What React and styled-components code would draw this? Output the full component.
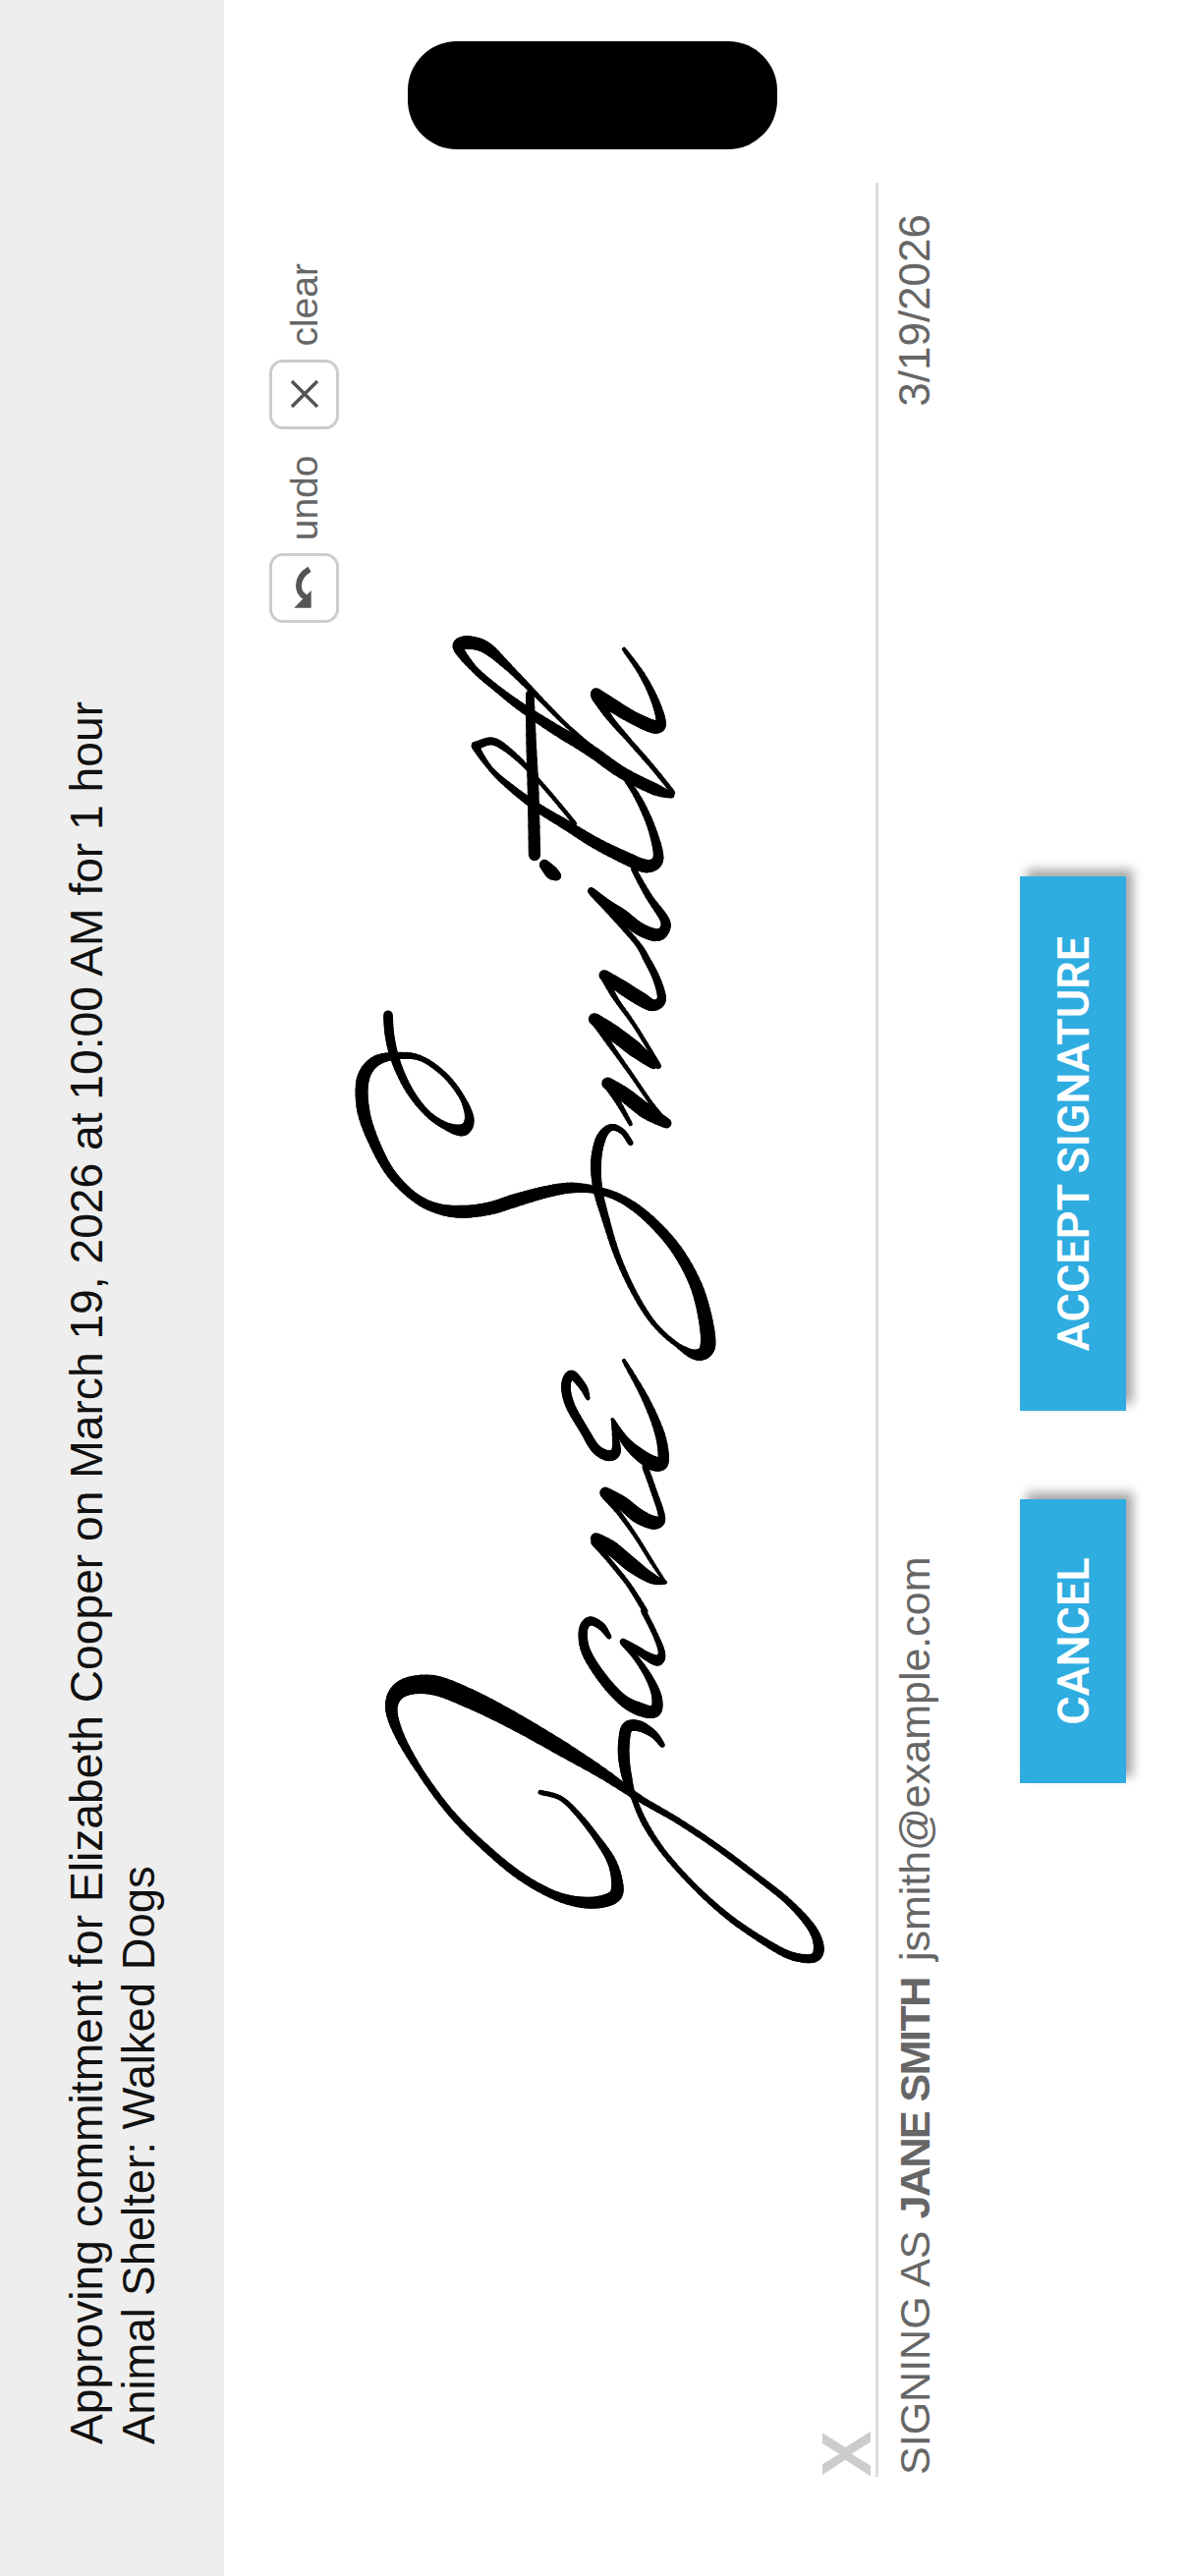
import React from 'react'
import styled, { createGlobalStyle } from 'styled-components'

const GlobalStyle = createGlobalStyle`
  html, body {
    margin: 0;
    width: 1206px;
    height: 2622px;
    overflow: hidden;
    background: #fff;
  }
`;

// the app is landscape on a phone held upright, so the whole page is turned
const Stage = styled.div`
  width: 2622px;
  height: 1206px;
  display: flex;
  flex-direction: column;
  transform-origin: 0 0;
  transform: translateY(2622px) rotate(-90deg);
  font-family: "Liberation Sans", Arial, sans-serif;
`;

const Island = styled.div`
  position: absolute;
  left: 2470px;
  top: 415px;
  width: 110px;
  height: 376px;
  background: #000;
  border-radius: 50px;
`;

const Header = styled.header`
  height: 228px;
  box-sizing: border-box;
  padding: 62px 0 0 134px;
  background: #eee;
  color: #111;
  line-height: 53px;
`;

const HeaderLine = styled.div`
  font-size: ${p => p.$size}px;
`;

const Body = styled.main`
  flex: 1;
  display: flex;
  flex-direction: column;
  padding: 46px 186px 0 101px;
`;

const Pad = styled.div`
  position: relative;
  height: 617px;
  border-bottom: 3px solid #ddd;
  display: flex;
  justify-content: flex-end;
  align-items: flex-start;
  padding-right: 82px;
`;

const Tool = styled.div`
  display: flex;
  align-items: center;
  gap: 13px;
  margin-left: 27px;
  color: #666;
  font-size: 39px;
  line-height: 65px;
`;

const ToolBox = styled.div`
  width: 71px;
  height: 71px;
  box-sizing: border-box;
  border: 3px solid #ccc;
  border-radius: 14px;
  background: #fff;
  display: flex;
  align-items: center;
  justify-content: center;
`;

const Signature = styled.svg`
  position: absolute;
  left: 0;
  top: 0;
  width: 2335px;
  height: 617px;
  pointer-events: none;
`;

const Mark = styled.span`
  position: absolute;
  left: 0;
  bottom: 4px;
  color: #ccc;
  font-size: 70px;
  line-height: 50px;
  font-weight: 700;
`;

const Meta = styled.div`
  display: flex;
  justify-content: space-between;
  align-items: baseline;
  padding: 12px 32px 0 2px;
  color: #666;
  font-size: 43px;
  line-height: 50px;
`;

const SignerName = styled.b`
  letter-spacing: -1.5px;
`;

const Email = styled.span`
  margin-left: 17px;
`;

const SignDate = styled.span`
  font-size: 44px;
`;

const Actions = styled.div`
  display: flex;
  justify-content: center;
  gap: 90px;
  margin-top: 82px;
`;

const Button = styled.button`
  width: ${p => p.$width}px;
  height: 108px;
  padding: 0;
  border: none;
  background: #2fade1;
  color: #fff;
  font-family: Roboto, sans-serif;
  font-size: 45px;
  font-weight: 600;
  box-shadow: 7px 7px 10px rgba(0, 0, 0, 0.35);
`;

// points traced from 3x crops of the signature: x, y, pen width
const crop = (x0, y0) => ([x, y, w]) => [x0 + x / 3, y0 + y / 3, w / 3 + 1]
const zoneC = crop(580, 960)
const zoneD = crop(540, 1380)
const zoneE = crop(450, 640)
const zoneS = crop(355, 1025)
const zoneJ = crop(380, 1640)

const strokes = [
  // S
  [zoneS, [[120,25,26],[125,90,26],[145,170,24],[185,255,20],[240,325,16],[300,365,20],[350,375,34],[368,340,26],[345,275,14],[290,205,14],[215,155,14],[135,150,20],[75,170,30],[42,225,36],[45,320,36],[80,420,30],[130,510,26],[200,580,24],[270,615,28],[345,625,36],[430,615,36],[510,590,38],[600,565,34],[680,552,30],[760,560,20],[840,590,22],[920,650,26],[1000,740,30],[1060,850,34],[1090,960,40],[1095,1040,44],[1060,1062,30],[1000,1030,12],[930,965,12],[870,870,14],[820,760,16],[785,650,20],[760,555,26],[755,470,30],[770,400,28],[800,368,18],[835,380,14],[860,415,14]]],
  // m
  [zoneC, [[115,428,32],[170,465,42],[235,515,44],[295,550,28]]],
  [zoneC, [[115,435,20],[150,490,14],[185,552,10]]],
  [zoneC, [[290,545,16],[245,485,10],[190,405,10],[130,320,12],[80,245,20]]],
  [zoneC, [[75,232,32],[135,275,44],[200,325,46],[255,370,26]]],
  [zoneC, [[270,375,16],[240,320,10],[190,240,10],[140,170,12],[105,105,20]]],
  [zoneC, [[65,-156,16],[130,-85,14],[205,0,14],[235,50,18],[265,110,20],[280,170,24],[255,190,30],[215,170,40],[160,135,40],[105,98,30]]],
  // i
  [zoneE, [[455,800,16],[500,840,28],[550,875,34],[600,915,36],[650,935,36],[675,925,30],[680,890,26],[630,816,18],[585,735,14]]],
  [zoneE, [[312,720,26],[335,745,38],[350,755,24]]],
  // t
  [zoneE, [[405,595,10],[360,540,10],[300,470,10],[230,395,14],[160,345,20],[110,355,22],[105,365,20],[150,430,12],[210,485,18],[290,545,24],[380,600,28],[470,655,32],[560,700,36],[625,725,38],[660,700,30],[640,610,22],[600,520,18],[555,450,12]]],
  [zoneE, [[268,200,22],[272,350,28],[278,500,32],[282,690,34]]],
  // h
  [zoneE, [[455,360,10],[380,295,10],[300,215,12],[200,115,20],[130,55,34],[70,42,38],[50,60,30],[100,125,18],[170,185,18],[250,245,24],[350,310,30],[450,370,34],[550,440,34],[650,490,34],[700,508,16]]],
  [zoneE, [[705,500,10],[640,420,12],[570,340,12],[510,270,16],[470,205,30]]],
  [zoneE, [[470,198,30],[530,240,38],[590,275,36],[650,300,38],[668,285,28],[650,220,22],[610,140,16],[555,62,10]]],
  // e
  [zoneD, [[175,130,8],[160,95,20],[125,58,25],[108,90,26],[120,150,26],[165,230,24],[200,285,26],[240,305,30],[262,285,26],[250,195,6]]],
  [zoneD, [[250,195,6],[285,255,22],[330,300,34],[380,330,42],[405,320,32],[395,240,28],[350,130,20],[285,15,10]]],
  // n
  [zoneD, [[228,418,30],[280,450,38],[330,490,42],[380,510,38],[400,490,18],[375,410,16],[350,340,16]]],
  [zoneD, [[225,425,20],[270,480,12],[320,550,10],[370,630,10],[410,690,6]]],
  [zoneD, [[200,558,30],[250,590,42],[310,640,42],[370,680,30],[412,692,8]]],
  [zoneD, [[195,570,20],[240,625,12],[300,700,12],[350,780,14]]],
  // a
  [zoneJ, [[720,78,10],[695,45,20],[660,30,24],[640,60,24],[650,125,26],[700,205,28],[760,270,30],[815,300,38],[860,305,34],[865,260,28],[840,200,20],[800,140,14],[762,95,16]]],
  [zoneJ, [[762,92,14],[800,115,20],[840,140,24],[870,150,30],[880,125,18],[860,70,14],[825,0,14]]],
  // J
  [zoneJ, [[882,408,12],[855,375,20],[810,350,30],[775,355,32],[765,400,32],[765,450,32],[775,510,28],[795,570,14],[830,650,16],[890,740,14],[980,840,14],[1080,930,16],[1180,1000,18],[1270,1050,22],[1340,1060,24],[1360,1030,30],[1340,970,24],[1270,890,18],[1170,810,16],[1050,720,16],[930,640,16],[810,570,18],[700,495,30],[560,410,44],[420,330,50],[290,265,56],[180,225,58],[90,235,50],[55,290,36],[80,380,26],[150,500,18],[240,620,18],[340,720,20],[450,810,22],[560,870,24],[650,890,32],[720,880,36],[745,850,36],[730,770,26],[680,690,18],[620,615,14],[570,570,12],[510,553,12]]],
]

const spline = pts => {
  const out = []
  for (let i = 0; i < pts.length - 1; i++) {
    const p0 = pts[Math.max(i - 1, 0)]
    const p1 = pts[i]
    const p2 = pts[i + 1]
    const p3 = pts[Math.min(i + 2, pts.length - 1)]
    for (let s = 0; s < 6; s++) {
      const t = s / 6
      const f = k => 0.5 * (2 * p1[k] + (p2[k] - p0[k]) * t + (2 * p0[k] - 5 * p1[k] + 4 * p2[k] - p3[k]) * t * t + (3 * p1[k] - p0[k] - 3 * p2[k] + p3[k]) * t * t * t)
      out.push([f(0), f(1), p1[2] + (p2[2] - p1[2]) * t])
    }
  }
  out.push(pts[pts.length - 1])
  return out
}

const InkStroke = ({ zone, pts }) => {
  const line = spline(pts.map(zone))
  return line.slice(1).map((p, i) => (
    <line key={i} x1={line[i][0]} y1={line[i][1]} x2={p[0]} y2={p[1]} strokeWidth={p[2]} />
  ))
}

const UndoIcon = () => (
  <svg width="65" height="65" viewBox="3 3 65 65" fill="none">
    <path d="M54.7 41C50 33 44 30 38 30S29 32 26 37" stroke="#555" strokeWidth="6" />
    <polygon points="33,42.7 15.3,42.7 15.3,25.3" fill="#555" />
  </svg>
)

const ClearIcon = () => (
  <svg width="28" height="28" viewBox="0 0 28 28" stroke="#555" strokeWidth="3.5">
    <path d="M1 1L27 27M27 1L1 27" />
  </svg>
)

export default function App() {
  return (
    <>
      <GlobalStyle />
      <Stage>
        <Island />
        <Header>
          <HeaderLine $size={46.2}>Approving commitment for Elizabeth Cooper on March 19, 2026 at 10:00 AM for 1 hour</HeaderLine>
          <HeaderLine $size={45.4}>Animal Shelter: Walked Dogs</HeaderLine>
        </Header>
        <Body>
          <Pad>
            <Signature viewBox="101 274 2335 617" role="img" aria-label="Jane Smith">
              {/* traced in upright screen coordinates */}
              <g transform="matrix(0 1 -1 0 2622 0)" stroke="#000" strokeLinecap="round">
                {strokes.map(([zone, pts], i) => <InkStroke key={i} zone={zone} pts={pts} />)}
              </g>
            </Signature>
            <Mark>X</Mark>
            <Tool>
              <ToolBox><UndoIcon /></ToolBox>
              undo
            </Tool>
            <Tool>
              <ToolBox><ClearIcon /></ToolBox>
              clear
            </Tool>
          </Pad>
          <Meta>
            <span>
              SIGNING AS <SignerName>JANE SMITH</SignerName>
              <Email>jsmith@example.com</Email>
            </span>
            <SignDate>3/19/2026</SignDate>
          </Meta>
          <Actions>
            <Button $width={289}>CANCEL</Button>
            <Button $width={544}>ACCEPT SIGNATURE</Button>
          </Actions>
        </Body>
      </Stage>
    </>
  )
}
